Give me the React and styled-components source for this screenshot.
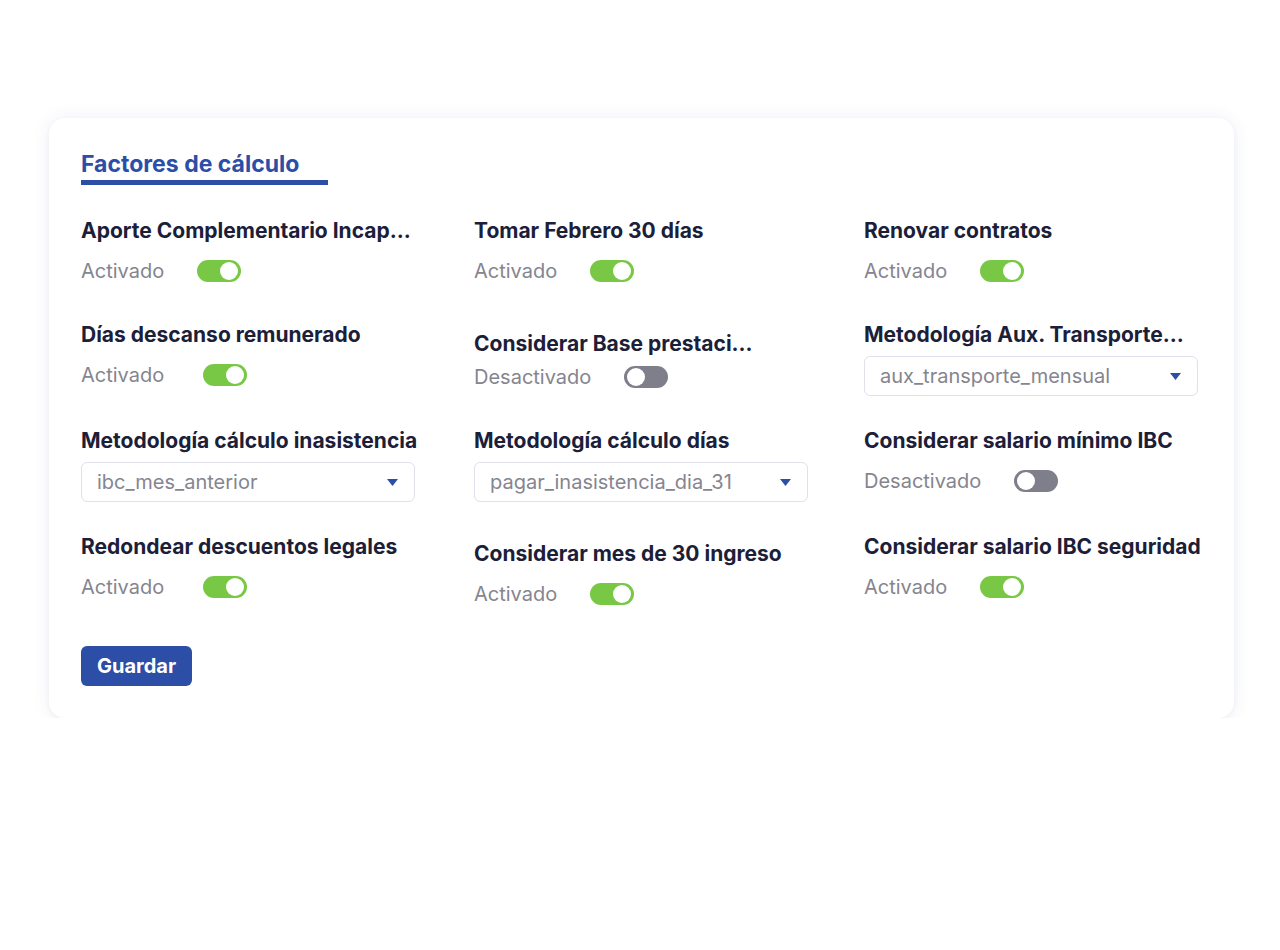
import React from "react";
import styled, { createGlobalStyle } from "styled-components";

const Global = createGlobalStyle`
  html, body { margin: 0; padding: 0; background: #ffffff; }
  body { font-family: Inter, "Noto Sans", sans-serif; -webkit-font-smoothing: antialiased; }
`;

const Page = styled.div`
  padding: 118px 46px 0 49px;
`;

const Card = styled.section`
  background: #fff;
  border-radius: 16px;
  box-shadow: 0 0 18px rgba(40, 60, 130, 0.08), 0 2px 6px rgba(40, 60, 130, 0.04);
  padding: 32px 32px 32px 32px;
`;

const Header = styled.h2`
  margin: 0;
  width: 247px;
  box-sizing: border-box;
  font-size: 23px;
  line-height: 28px;
  font-weight: 700;
  color: #2c4ea6;
  padding-bottom: 2px;
  border-bottom: 5px solid #2c4ea6;
`;

const Grid = styled.div`
  margin-top: 32px;
  display: grid;
  grid-template-columns: 393px 390px 1fr;
  row-gap: 31px;
  align-items: start;
`;

const Item = styled.div`
  display: flex;
  flex-direction: column;
  gap: ${(p) => p.$gap ?? 7}px;
  margin-top: ${(p) => p.$shift ?? 0}px;
`;

const Title = styled.div`
  font-size: 21px;
  line-height: 28px;
  font-weight: 700;
  color: #1b2038;
  white-space: nowrap;
`;

const ToggleRow = styled.div`
  display: flex;
  align-items: center;
  height: 38px;
`;

const Label = styled.span`
  font-size: 20px;
  color: #85858f;
  margin-right: ${(p) => p.$gap ?? 33}px;
`;

const Track = styled.span`
  position: relative;
  display: inline-block;
  width: 44px;
  height: 22px;
  border-radius: 11px;
  background: ${(p) => (p.$on ? "#78c846" : "#7e7f8b")};
`;

const Knob = styled.span`
  position: absolute;
  top: 2px;
  ${(p) => (p.$on ? "right: 3px;" : "left: 3px;")}
  width: 18px;
  height: 18px;
  border-radius: 50%;
  background: #fff;
`;

const SelectBox = styled.div`
  width: 334px;
  height: 40px;
  box-sizing: border-box;
  border: 1px solid #dfe2ec;
  border-radius: 6px;
  display: flex;
  align-items: center;
  justify-content: space-between;
  padding: 0 16px 0 15px;
  font-size: 20px;
  color: #85858f;
`;

const Button = styled.button`
  margin-top: 33px;
  height: 40px;
  padding: 0 16px;
  border: none;
  border-radius: 6px;
  background: #2c4ea6;
  color: #fff;
  font-family: Inter, "Noto Sans", sans-serif;
  font-size: 20px;
  font-weight: 700;
  cursor: pointer;
`;

const Arrow = () => (
  <svg width="11" height="7" viewBox="0 0 11 7">
    <path d="M0 0 H11 L5.5 7 Z" fill="#2c4ea6" />
  </svg>
);

function Toggle({ on, label, gap }) {
  return (
    <ToggleRow>
      <Label $gap={gap}>{label ?? (on ? "Activado" : "Desactivado")}</Label>
      <Track $on={on}>
        <Knob $on={on} />
      </Track>
    </ToggleRow>
  );
}

function Select({ value }) {
  return (
    <SelectBox>
      <span>{value}</span>
      <Arrow />
    </SelectBox>
  );
}

const fields = [
  { title: "Aporte Complementario Incap...", toggle: true },
  { title: "Tomar Febrero 30 días", toggle: true },
  { title: "Renovar contratos", toggle: true },
  { title: "Días descanso remunerado", toggle: true, gap: 39 },
  { title: "Considerar Base prestaci...", toggle: false, shift: 9, itemGap: -2 },
  { title: "Metodología Aux. Transporte...", select: "aux_transporte_mensual" },
  { title: "Metodología cálculo inasistencia", select: "ibc_mes_anterior" },
  { title: "Metodología cálculo días", select: "pagar_inasistencia_dia_31" },
  { title: "Considerar salario mínimo IBC", toggle: false },
  { title: "Redondear descuentos legales", toggle: true, gap: 39 },
  { title: "Considerar mes de 30 ingreso", toggle: true, shift: 7 },
  { title: "Considerar salario IBC seguridad", toggle: true },
];

export default function App() {
  return (
    <>
      <Global />
      <Page>
        <Card>
          <Header>Factores de cálculo</Header>
          <Grid>
            {fields.map((f) => (
              <Item key={f.title} $shift={f.shift} $gap={f.itemGap}>
                <Title>{f.title}</Title>
                {f.select ? <Select value={f.select} /> : <Toggle on={f.toggle} gap={f.gap} />}
              </Item>
            ))}
          </Grid>
          <Button>Guardar</Button>
        </Card>
      </Page>
    </>
  );
}
